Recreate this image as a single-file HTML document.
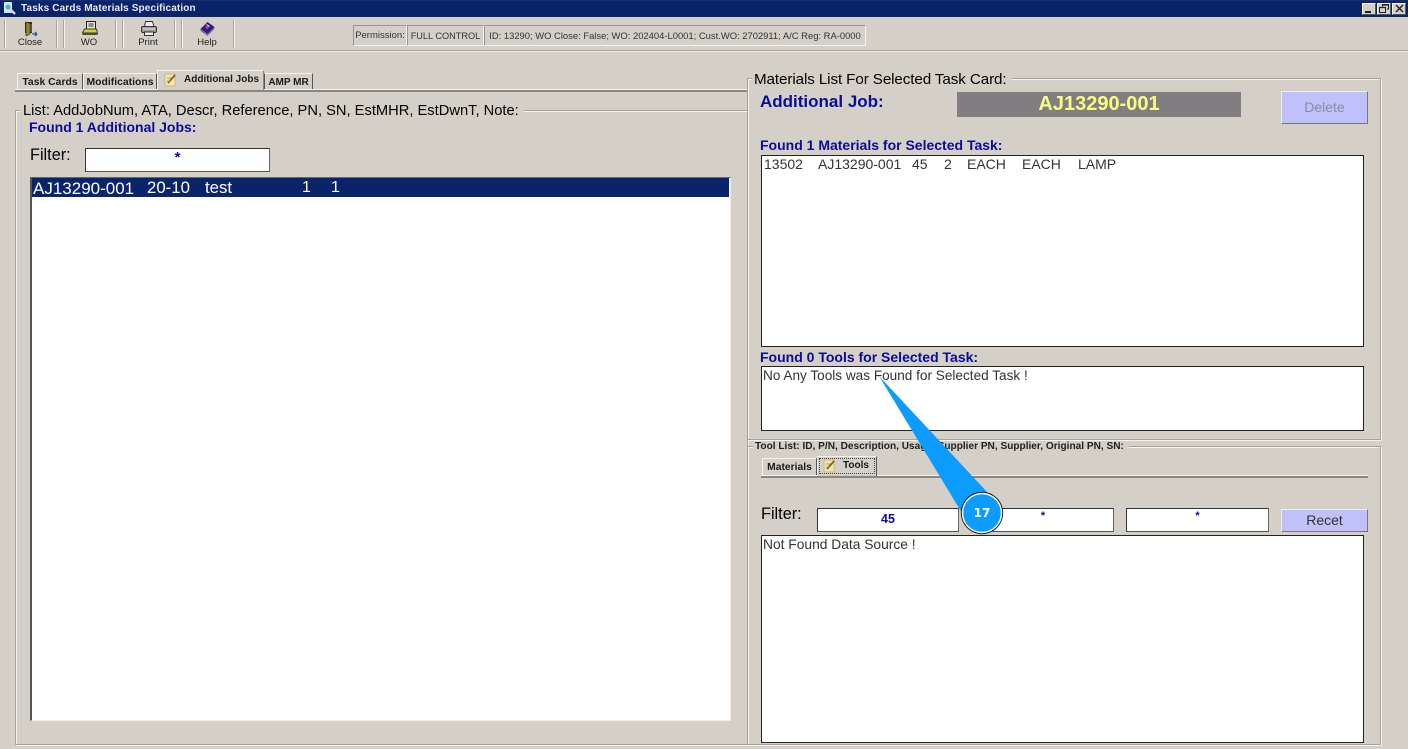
<!DOCTYPE html>
<html>
<head>
<meta charset="utf-8">
<style>
html,body{margin:0;padding:0;width:1408px;height:749px;overflow:hidden;background:#d4d0c8}
body{position:relative;font-family:"Liberation Sans",sans-serif;color:#000}
.a{position:absolute;box-sizing:border-box;white-space:pre}
.t{position:absolute;white-space:pre;line-height:1}
.b{font-weight:bold}
.blue{color:#0b0b9a}
.box{position:absolute;box-sizing:border-box;background:#fff;border:1px solid #222}
.sep{position:absolute;width:1px;background:#a8a59e;box-shadow:1px 0 0 #f4f2ee}
.grp{position:absolute;box-sizing:border-box;border:1px solid #a5a29b;box-shadow:1px 1px 0 #f4f2ee, inset 1px 1px 0 #f4f2ee}
.leg{position:absolute;background:#d4d0c8;white-space:pre;line-height:1;padding:0 4px 0 2px}
.tab{position:absolute;box-sizing:border-box;border-top:1px solid #f4f2ee;border-left:1px solid #f4f2ee;border-right:1px solid #555;font-weight:bold;font-size:10px;line-height:17px;text-align:center;white-space:pre;background:#d4d0c8;color:#1a1a1a}
.sunk{position:absolute;box-sizing:border-box;border:1px solid;border-color:#9a978f #f4f2ee #f4f2ee #9a978f;font-size:9.5px;color:#333;line-height:20px;white-space:pre;text-align:center}
.inp{position:absolute;box-sizing:border-box;background:#fff;border:1px solid #333;border-right-color:#666;border-bottom-color:#555;text-align:center;color:#0b0b9a;font-weight:bold}
.btn{position:absolute;box-sizing:border-box;background:#c0c0fa;border:1px solid;border-color:#eeeeee #77757a #77757a #eeeeee;text-align:center;font-size:14px}
.tool{position:absolute;font-size:9.5px;color:#222;text-align:center;line-height:1}
</style>
</head>
<body>
<!-- title bar -->
<div class="a" style="left:0;top:0;width:1408px;height:17px;background:#0a246a;border-top:1px solid #1a2f6a"></div>
<svg class="a" style="left:2px;top:1px" width="15" height="15" viewBox="0 0 15 15"><rect x="2" y="1" width="8" height="11" fill="#cfe3f5"/><circle cx="6" cy="6" r="3.2" fill="#5da8dc" stroke="#dff" stroke-width="1"/><path d="M8 8l5 5" stroke="#d8d8d8" stroke-width="2.4"/></svg>
<div class="t b" style="left:21px;top:4px;font-size:10px;color:#e6e9f2;letter-spacing:.14px">Tasks Cards Materials Specification</div>
<!-- window buttons -->
<div class="a" style="left:1362px;top:3px;width:14px;height:12px;background:#d4d0c8;border:1px solid;border-color:#f4f2ee #555 #555 #f4f2ee"><div class="a" style="left:2px;top:7px;width:6px;height:2px;background:#222"></div></div>
<div class="a" style="left:1377px;top:3px;width:14px;height:12px;background:#d4d0c8;border:1px solid;border-color:#f4f2ee #555 #555 #f4f2ee"><svg class="a" style="left:1px;top:0" width="10" height="9" viewBox="0 0 10 9"><path d="M3.500 2.500V.5h6v4.500H8M.5 3.500h6v5h-6z" fill="none" stroke="#222"/><path d="M3 1h6.500M0 3.500h7" stroke="#222" stroke-width="1.300"/></svg></div>
<div class="a" style="left:1392px;top:3px;width:14px;height:12px;background:#d4d0c8;border:1px solid;border-color:#f4f2ee #555 #555 #f4f2ee"><svg class="a" style="left:2px;top:0" width="9" height="9" viewBox="0 0 9 9"><path d="M1 1l7 7M8 1L1 8" stroke="#222" stroke-width="1.400"/></svg></div>

<!-- toolbar -->
<div class="sep" style="left:4px;top:20px;height:28px"></div>
<div class="sep" style="left:56px;top:20px;height:28px"></div>
<div class="sep" style="left:63px;top:20px;height:28px"></div>
<div class="sep" style="left:115px;top:20px;height:28px"></div>
<div class="sep" style="left:122px;top:20px;height:28px"></div>
<div class="sep" style="left:174px;top:20px;height:28px"></div>
<div class="sep" style="left:181px;top:20px;height:28px"></div>
<div class="sep" style="left:233px;top:20px;height:28px"></div>
<!-- door icon -->
<svg class="a" style="left:24px;top:21px" width="15" height="16" viewBox="0 0 15 16"><path d="M1 1h7v11H1z" fill="#3a3012"/><path d="M2 1l4 1.500V13l-4 2z" fill="#8f8a2a" stroke="#2c260e" stroke-width=".6"/><path d="M7 3v8" stroke="#777" stroke-width="1"/><path d="M8 13h5M13 13l-2-2M13 13l-2 2" stroke="#2c4fb5" stroke-width="1.300" fill="none"/></svg>
<div class="tool" style="left:5px;top:38px;width:50px">Close</div>
<!-- WO icon -->
<svg class="a" style="left:82px;top:21px" width="16" height="15" viewBox="0 0 16 15"><rect x="4.500" y=".5" width="9" height="8" fill="#e4e4da" stroke="#1d1d1d"/><path d="M6.500 3h5M6.500 5h5" stroke="#333"/><path d="M2.500 8h12l1 4H.5z" fill="#d6cc3a" stroke="#3a3a20"/><rect x=".5" y="12" width="15" height="2" fill="#4a4a3a"/></svg>
<div class="tool" style="left:64px;top:38px;width:50px">WO</div>
<!-- printer icon -->
<svg class="a" style="left:141px;top:21px" width="16" height="15" viewBox="0 0 16 15"><path d="M3.500 5.500l1-5h7l1.500 5z" fill="#eee" stroke="#333"/><rect x=".5" y="5.500" width="15" height="6" rx="1.500" fill="#9d9d9d" stroke="#333"/><path d="M2 8h12" stroke="#e4e4e4"/><rect x="3.500" y="11" width="9" height="3.500" fill="#eee" stroke="#333"/></svg>
<div class="tool" style="left:123px;top:38px;width:50px">Print</div>
<!-- help icon -->
<svg class="a" style="left:199px;top:21px" width="17" height="16" viewBox="0 0 17 16"><path d="M8.500 1l7 5-7 7-7-5z" fill="#2a1a8a"/><path d="M1.500 8l7 5 7-7v2l-7 7-7-5z" fill="#8a6a9a"/><path d="M6 4.500l4.500 1.500-3 2.500z" fill="#d63a78"/><path d="M7.500 3.500l3 2" stroke="#efe04a" stroke-width="1.200"/></svg>
<div class="tool" style="left:182px;top:38px;width:50px">Help</div>

<div class="sunk" style="left:353px;top:25px;width:54px;height:21px">Permission:</div>
<div class="sunk" style="left:407px;top:25px;width:77px;height:21px;font-size:9.200px">FULL CONTROL</div>
<div class="sunk" style="left:484px;top:25px;width:382px;height:21px;font-size:9.420px">ID: 13290; WO Close: False; WO: 202404-L0001; Cust.WO: 2702911; A/C Reg: RA-0000</div>
<div class="a" style="left:0;top:50px;width:1408px;height:1px;background:#a8a59e"></div>
<div class="a" style="left:0;top:51px;width:1408px;height:1px;background:#ece9e3"></div>

<!-- left tabs -->
<div class="a" style="left:15px;top:89px;width:733px;height:1px;background:#f4f2ee"></div>
<div class="a" style="left:15px;top:90px;width:733px;height:2px;background:#8a8780"></div>
<div class="tab" style="left:17px;top:73px;width:66px;height:16px;font-size:10.400px">Task Cards</div>
<div class="tab" style="left:83px;top:73px;width:74px;height:16px;font-size:10.400px">Modifications</div>
<div class="tab" style="left:157px;top:70px;width:107px;height:20px;border-right-color:#8a8780;line-height:18px;padding-left:22px;font-size:10px">Additional Jobs</div>
<svg class="a" style="left:163px;top:72px" width="15" height="15" viewBox="0 0 15 15"><rect x="2" y="2" width="10" height="12" fill="#f2e6b0" stroke="#c9b97a"/><path d="M5 11l7-8" stroke="#8a6a20" stroke-width="2"/><path d="M4 6h4M4 9h3" stroke="#b0a070"/></svg>
<div class="tab" style="left:264px;top:73px;width:49px;height:16px;border-left:1px solid #555">AMP MR</div>

<!-- left group -->
<div class="grp" style="left:15px;top:110px;width:733px;height:635px"></div>
<div class="leg" style="left:21px;top:104px;font-size:14.700px">List: AddJobNum, ATA, Descr, Reference, PN, SN, EstMHR, EstDwnT, Note:</div>
<div class="t blue b" style="left:29px;top:120px;font-size:14px">Found 1 Additional Jobs:</div>
<div class="t" style="left:30px;top:147px;font-size:16.300px">Filter:</div>
<div class="inp" style="left:85px;top:148px;width:185px;height:24px;font-size:15px;line-height:18px">*</div>
<div class="a" style="left:30px;top:177px;width:701px;height:544px;background:#fff;border:1px solid;border-color:#666 #f0eee8 #f0eee8 #555;border-left-width:2px;border-top-width:1px"></div>
<div class="a" style="left:32px;top:178px;width:697px;height:19px;background:#0a246a"></div>
<div class="t" style="left:33px;top:180px;font-size:17px;color:#fff">AJ13290-001</div>
<div class="t" style="left:147px;top:180px;font-size:16.800px;color:#fff">20-10</div>
<div class="t" style="left:205px;top:180px;font-size:16.800px;color:#fff">test</div>
<div class="t" style="left:302px;top:180px;font-size:16px;color:#fff">1</div>
<div class="t" style="left:331px;top:180px;font-size:16px;color:#fff">1</div>

<!-- right top group -->
<div class="grp" style="left:747px;top:78px;width:634px;height:362px"></div>
<div class="leg" style="left:752px;top:72px;font-size:15.200px;letter-spacing:-.1px">Materials List For Selected Task Card:</div>
<div class="t b blue" style="left:760px;top:93px;font-size:17px">Additional Job:</div>
<div class="a" style="left:957px;top:92px;width:284px;height:25px;background:#807e80;color:#fcfc80;font-weight:bold;font-size:20px;line-height:24px;text-align:center">AJ13290-001</div>
<div class="btn" style="left:1281px;top:91px;width:87px;height:33px;line-height:31px;color:#8a8aa8">Delete</div>
<div class="t b blue" style="left:760px;top:138px;font-size:14px">Found 1 Materials for Selected Task:</div>
<div class="box" style="left:761px;top:155px;width:603px;height:192px"></div>
<div class="t" style="left:764px;top:157px;font-size:14px;color:#333">13502</div>
<div class="t" style="left:818px;top:157px;font-size:14px;color:#333">AJ13290-001</div>
<div class="t" style="left:912px;top:157px;font-size:14px;color:#333">45</div>
<div class="t" style="left:944px;top:157px;font-size:14px;color:#333">2</div>
<div class="t" style="left:967px;top:157px;font-size:14px;color:#333">EACH</div>
<div class="t" style="left:1022px;top:157px;font-size:14px;color:#333">EACH</div>
<div class="t" style="left:1078px;top:157px;font-size:14px;color:#333">LAMP</div>
<div class="t b blue" style="left:760px;top:350px;font-size:14px">Found 0 Tools for Selected Task:</div>
<div class="box" style="left:761px;top:366px;width:603px;height:65px"></div>
<div class="t" style="left:763px;top:369px;font-size:13.600px;color:#333">No Any Tools was Found for Selected Task !</div>

<!-- right bottom group -->
<div class="grp" style="left:747px;top:446px;width:634px;height:299px"></div>
<div class="leg" style="left:753px;top:442px;font-size:10.100px;font-weight:bold;color:#222;padding-right:5px">Tool List: ID, P/N, Description, Usage, Supplier PN, Supplier, Original PN, SN:</div>
<div class="a" style="left:761px;top:475px;width:607px;height:1px;background:#f4f2ee"></div>
<div class="a" style="left:761px;top:476px;width:607px;height:2px;background:#8a8780"></div>
<div class="tab" style="left:762px;top:458px;width:55px;height:17px;font-size:10.300px">Materials</div>
<div class="tab" style="left:817px;top:456px;width:60px;height:20px;line-height:17px;padding-left:18px;border-right-color:#555">Tools</div>
<div class="a" style="left:819px;top:458px;width:56px;height:16px;border:1px dotted #444"></div>
<svg class="a" style="left:822px;top:458px" width="15" height="15" viewBox="0 0 15 15"><rect x="2" y="2" width="10" height="12" fill="#f2e6b0" stroke="#c9b97a"/><path d="M5 11l7-8" stroke="#8a6a20" stroke-width="2"/><path d="M4 6h4M4 9h3" stroke="#b0a070"/></svg>
<div class="t" style="left:761px;top:506px;font-size:16.300px">Filter:</div>
<div class="inp" style="left:817px;top:508px;width:142px;height:24px;font-size:12.500px;line-height:20px">45</div>
<div class="inp" style="left:972px;top:508px;width:142px;height:24px;font-size:11px;line-height:14px">*</div>
<div class="inp" style="left:1126px;top:508px;width:143px;height:24px;font-size:11px;line-height:14px">*</div>
<div class="btn" style="left:1281px;top:509px;width:87px;height:23px;line-height:21px;color:#333">Recet</div>
<div class="box" style="left:761px;top:535px;width:603px;height:208px"></div>
<div class="t" style="left:763px;top:538px;font-size:13.800px;color:#333">Not Found Data Source !</div>

<!-- callout -->
<svg class="a" style="left:870px;top:370px" width="150" height="170" viewBox="0 0 150 170"><path d="M9 6L118 123 92 143z" fill="#0c9cff"/><circle cx="112" cy="143" r="19.500" fill="#0c9cff" stroke="#fff" stroke-width="1.500"/><circle cx="112" cy="143" r="20.700" fill="none" stroke="#222" stroke-width="1"/></svg>
<div class="t" style="left:962px;top:507px;width:40px;text-align:center;font-family:'DejaVu Sans',sans-serif;font-weight:bold;font-size:12px;color:#fff">17</div>
</body>
</html>
